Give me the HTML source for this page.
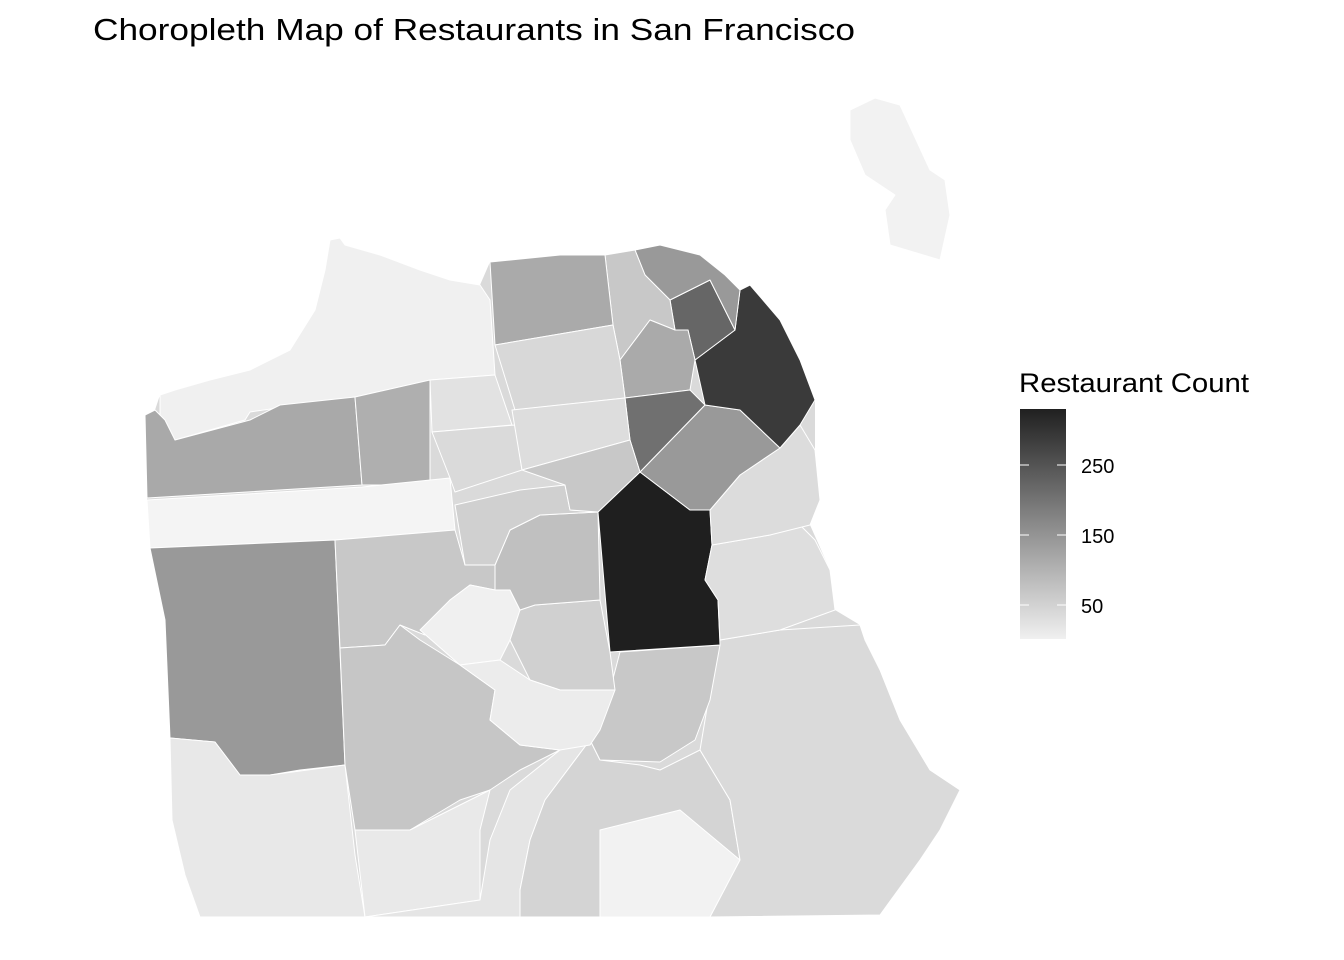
<!DOCTYPE html>
<html><head><meta charset="utf-8"><style>
body{margin:0;background:#fff;width:1344px;height:960px;overflow:hidden;font-family:"Liberation Sans",sans-serif}
</style></head><body>
<svg width="1344" height="960" xmlns="http://www.w3.org/2000/svg" style="position:absolute;left:0;top:0">
<defs><linearGradient id="g" x1="0" y1="0" x2="0" y2="1"><stop offset="0" stop-color="#202020"/><stop offset="0.5" stop-color="#8a8a8a"/><stop offset="1" stop-color="#f0f0f0"/></linearGradient></defs>
<text x="93" y="40" font-size="31" fill="#000" textLength="762" lengthAdjust="spacingAndGlyphs">Choropleth Map of Restaurants in San Francisco</text>
<polygon fill="#dadada" points="145,415 155,410 160,395 175,390 210,380 250,370 290,350 315,310 325,270 330,240 340,238 345,245 380,255 420,270 450,280 480,285 490,262 560,255 605,255 635,250 660,245 700,255 725,275 740,290 750,285 780,320 800,360 815,400 815,450 820,500 810,525 830,570 835,610 860,625 865,640 880,670 900,720 930,770 960,790 940,830 920,860 880,915 200,917 185,875 172,820 170,738 165,620 150,548 147,498"/>
<g stroke="#fff" stroke-width="1" stroke-linejoin="round">
<polygon fill="#f0f0f0" points="160,395 175,390 210,380 250,370 290,350 315,310 325,270 330,240 340,238 345,245 380,255 420,270 450,280 480,285 490,300 493,345 495,375 430,380 355,397 250,412 245,420 175,440 160,435"/>
<polygon fill="#a9a9a9" points="145,415 155,410 165,420 175,440 250,420 280,405 355,397 362,485 147,498"/>
<polygon fill="#afafaf" points="355,397 430,380 430,485 362,485"/>
<polygon fill="#f4f4f4" points="147,500 362,487 450,478 455,530 335,540 150,548"/>
<polygon fill="#999" points="150,548 335,540 345,765 300,770 270,775 240,775 215,742 170,738 165,620"/>
<polygon fill="#c8c8c8" points="335,540 455,530 465,565 495,565 495,590 470,585 450,600 425,635 400,625 385,645 340,648"/>
<polygon fill="#e8e8e8" points="170,738 215,742 240,775 270,775 345,765 355,855 365,917 200,917 185,875 172,820"/>
<polygon fill="#c6c6c6" points="340,648 385,645 400,625 420,640 460,665 495,690 490,720 520,745 560,750 520,770 490,790 460,800 410,830 355,830 345,765"/>
<polygon fill="#f0f0f0" points="420,630 450,600 470,585 495,590 510,590 520,610 510,640 500,660 460,665"/>
<polygon fill="#e9e9e9" points="355,830 410,830 460,805 490,790 480,830 480,900 365,917"/>
<polygon fill="#e5e5e5" points="480,900 490,840 510,790 560,750 590,740 545,800 530,840 520,890 520,917 365,917"/>
<polygon fill="#d4d4d4" points="545,800 590,740 600,760 640,765 660,770 680,760 700,750 730,800 740,860 710,917 520,917 520,890 530,840"/>
<polygon fill="#f2f2f2" points="600,830 640,820 680,810 710,835 740,860 710,917 600,917"/>
<polygon fill="#dadada" points="700,750 710,690 720,640 780,630 860,625 865,640 880,670 900,720 930,770 960,790 940,830 920,860 880,915 710,917 740,860 730,800"/>
<polygon fill="#c8c8c8" points="590,740 610,690 620,652 720,645 710,700 695,740 660,762 600,760"/>
<polygon fill="#d0d0d0" points="510,640 520,610 535,605 600,600 610,652 615,690 560,690 530,680"/>
<polygon fill="#ececec" points="460,665 500,660 530,680 560,690 615,690 600,730 590,745 560,750 520,745 490,720 495,690"/>
<polygon fill="#c0c0c0" points="495,565 510,530 540,515 598,512 600,600 535,605 520,610 510,590 495,590"/>
<polygon fill="#d0d0d0" points="455,505 520,490 565,485 570,510 598,512 540,515 510,530 495,565 465,565"/>
<polygon fill="#1f1f1f" points="598,512 640,472 690,510 710,510 712,545 705,580 718,600 720,645 610,652"/>
<polygon fill="#dedede" points="712,545 770,535 800,525 815,540 830,570 835,610 780,630 720,640 718,600 705,580"/>
<polygon fill="#dcdcdc" points="710,510 740,475 780,448 800,425 815,450 820,500 810,525 770,535 712,545"/>
<polygon fill="#999" points="640,472 705,405 740,410 780,448 740,475 710,510 690,510"/>
<polygon fill="#3a3a3a" points="695,360 735,330 740,290 750,285 780,320 800,360 815,400 800,425 780,448 740,410 705,405"/>
<polygon fill="#666" points="670,300 710,280 735,330 695,360 688,330 675,330"/>
<polygon fill="#999" points="635,250 660,245 700,255 725,275 740,290 735,330 710,280 670,300 645,275"/>
<polygon fill="#c8c8c8" points="605,255 635,250 645,275 670,300 675,330 650,320 620,360 613,325"/>
<polygon fill="#aaa" points="620,360 650,320 675,330 688,330 695,360 690,390 625,398"/>
<polygon fill="#707070" points="625,398 690,390 705,405 640,472 630,440"/>
<polygon fill="#aaa" points="490,262 560,255 605,255 613,325 495,345"/>
<polygon fill="#d8d8d8" points="495,345 613,325 620,360 625,398 515,410"/>
<polygon fill="#e2e2e2" points="430,380 495,375 512,425 432,432"/>
<polygon fill="#dadada" points="432,432 515,425 522,470 455,492 450,478"/>
<polygon fill="#dddddd" points="512,410 625,398 630,440 522,470"/>
<polygon fill="#c8c8c8" points="522,470 630,440 640,472 598,512 570,510 565,485"/>
<polygon fill="#f2f2f2" points="850,110 875,98 900,105 930,170 945,180 950,215 940,260 890,245 885,210 895,195 865,175 850,140"/>
</g>
<rect x="1020" y="409" width="46" height="230" fill="url(#g)"/>
<g stroke="#fff" stroke-width="1">
<line x1="1020" y1="465" x2="1029" y2="465"/><line x1="1057" y1="465" x2="1066" y2="465"/>
<line x1="1020" y1="535" x2="1029" y2="535"/><line x1="1057" y1="535" x2="1066" y2="535"/>
<line x1="1020" y1="605" x2="1029" y2="605"/><line x1="1057" y1="605" x2="1066" y2="605"/>
</g>
<text x="1019" y="392" font-size="27" fill="#000" textLength="230" lengthAdjust="spacingAndGlyphs">Restaurant Count</text>
<g font-size="20" fill="#000">
<text x="1081" y="473">250</text><text x="1081" y="543">150</text><text x="1081" y="613">50</text>
</g>
</svg>
</body></html>
